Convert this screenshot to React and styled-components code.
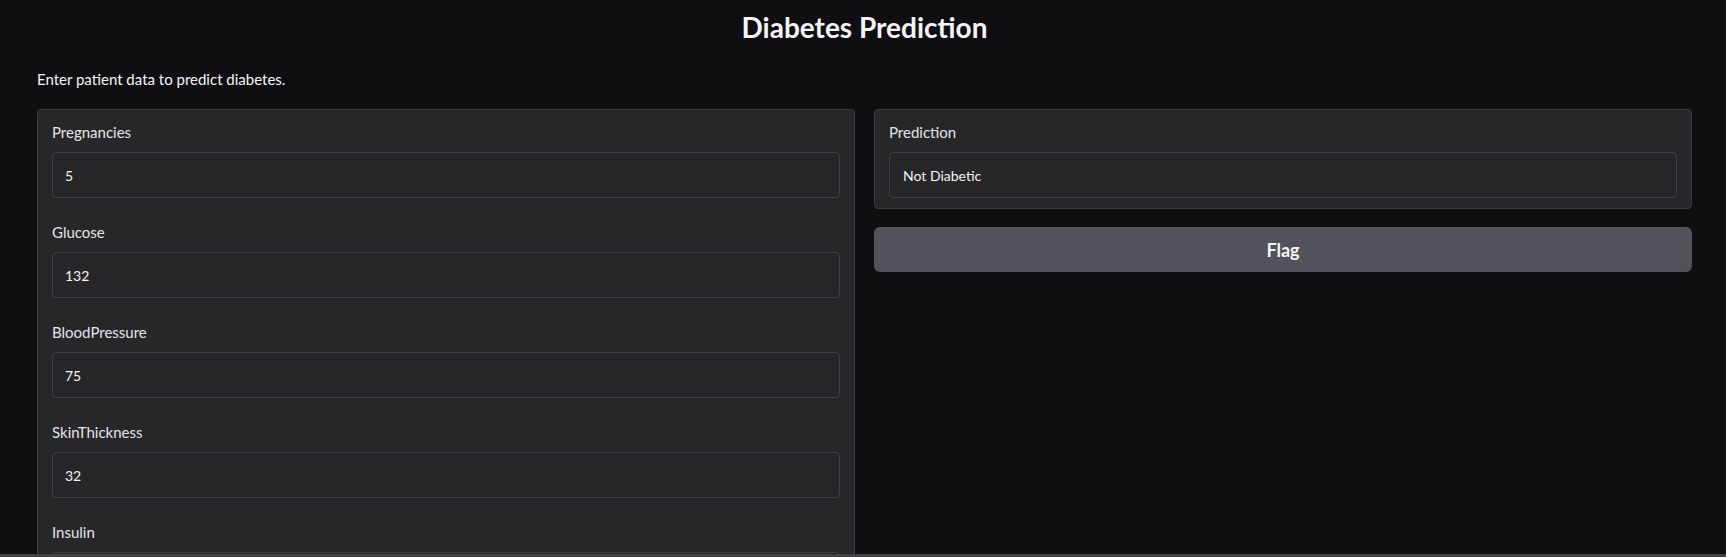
import React from 'react'
import styled, { createGlobalStyle } from 'styled-components'

const GlobalStyle = createGlobalStyle`
  *, *::before, *::after {
    box-sizing: border-box;
  }
  html, body {
    margin: 0;
    padding: 0;
    overflow: hidden;
    background: #0f0f11;
  }
  body {
    font-family: Lato, "Noto Sans", "Liberation Sans", sans-serif;
    color: #f4f4f5;
  }
`

const fields = [
  { label: 'Pregnancies', value: '5' },
  { label: 'Glucose', value: '132' },
  { label: 'BloodPressure', value: '75' },
  { label: 'SkinThickness', value: '32' },
  { label: 'Insulin', value: '0' },
  { label: 'BMI', value: '33.6' },
  { label: 'DiabetesPedigreeFunction', value: '0.627' },
  { label: 'Age', value: '50' },
]

function App() {
  return (
    <Page>
      <GlobalStyle />
      <Title>Diabetes Prediction</Title>
      <Description>Enter patient data to predict diabetes.</Description>
      <Columns>
        <Panel>
          {fields.map(f => (
            <Field key={f.label}>
              <Label>{f.label}</Label>
              <Input type="number" defaultValue={f.value} />
            </Field>
          ))}
        </Panel>

        <Side>
          <OutputPanel>
            <Label>Prediction</Label>
            <OutputBox>Not Diabetic</OutputBox>
          </OutputPanel>
          <FlagButton>Flag</FlagButton>
        </Side>
      </Columns>
      <BottomBar />
    </Page>
  )
}

export default App

const Page = styled.div`
  padding: 0 34px 0 37px;
`

const Title = styled.h1`
  margin: 0;
  padding-top: 10px;
  height: 46px;
  line-height: 34px;
  text-align: center;
  font-size: 28px;
  font-weight: 700;
  color: #f4f4f5;
`

const Description = styled.p`
  margin: 0;
  padding-top: 22px;
  height: 63px;
  line-height: 22px;
  font-size: 15px;
  color: #f4f4f5;
`

const Columns = styled.div`
  display: grid;
  grid-template-columns: repeat(2, minmax(0, 1fr));
  align-items: start;
  gap: 19px;
`

const Panel = styled.div`
  display: flex;
  flex-direction: column;
  gap: 24px;
  background: #27272a;
  border: 1px solid #3a3a3f;
  border-radius: 4px;
  padding: 12px 14px 12px 14px;
`

const Field = styled.div`
  display: flex;
  flex-direction: column;
`

const Label = styled.span`
  display: block;
  height: 20px;
  line-height: 20px;
  margin-bottom: 10px;
  font-size: 15px;
  color: #e4e4e7;
`

const Input = styled.input`
  height: 46px;
  width: 100%;
  padding: 0 12px;
  background: #27272a;
  border: 1px solid #3f3f46;
  border-radius: 4px;
  color: #f4f4f5;
  font-family: inherit;
  font-size: 14px;
  outline: none;
  -moz-appearance: textfield;
  &::-webkit-inner-spin-button,
  &::-webkit-outer-spin-button {
    -webkit-appearance: none;
    margin: 0;
  }
`

const Side = styled.div`
  display: flex;
  flex-direction: column;
  gap: 18px;
`

const OutputPanel = styled.div`
  background: #27272a;
  border: 1px solid #3a3a3f;
  border-radius: 4px;
  padding: 12px 14px 10px;
`

const OutputBox = styled.div`
  height: 46px;
  display: flex;
  align-items: center;
  padding: 0 13px;
  border: 1px solid #3f3f46;
  border-radius: 4px;
  font-size: 14px;
  color: #f4f4f5;
`

const FlagButton = styled.button`
  height: 45px;
  border: none;
  border-radius: 6px;
  background: #52525b;
  color: #f4f4f5;
  font-family: inherit;
  font-size: 18px;
  font-weight: 700;
  cursor: pointer;
`

const BottomBar = styled.div`
  position: fixed;
  left: 0;
  right: 0;
  bottom: 0;
  height: 3px;
  background: #424242;
`
